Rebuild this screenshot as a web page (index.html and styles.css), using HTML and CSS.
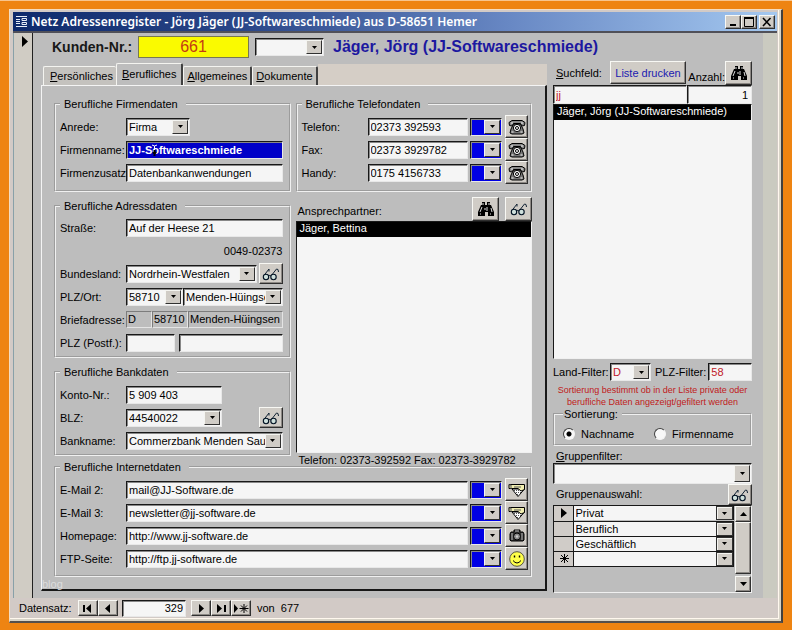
FILE: index.html
```html
<!DOCTYPE html>
<html lang="de">
<head>
<meta charset="utf-8">
<title>Netz Adressenregister</title>
<link rel="stylesheet" href="styles.css">
</head>
<body>
<svg class="defs" aria-hidden="true">
  <symbol id="i-find" viewBox="0 0 16 14">
    <path d="M4 0h3v3h2V0h3v3h1l3 7v4h-6v-4H7v4H0v-4l3-7h1z" fill="#000"/>
    <path d="M5 1v2M11 1v2M4 5l-2 5M9 5v4M7 6v2M13 6l1 4M2 12h1M12 12h1" stroke="#ddd" fill="none"/>
  </symbol>
  <symbol id="i-glasses" viewBox="0 0 18 14">
    <path d="M1.500 9L7 2v2.500M9 9l5.500-7q2-.5 2 3" fill="none" stroke="#123"/>
    <circle cx="4" cy="10" r="2.700" fill="#cfe0dc" stroke="#012" stroke-width="1.100"/>
    <circle cx="11.500" cy="10" r="2.700" fill="#cfe0dc" stroke="#012" stroke-width="1.100"/>
    <path d="M6.500 9q1.200-1.200 2.400 0" fill="none" stroke="#012"/>
  </symbol>
  <symbol id="i-phone" viewBox="0 0 18 16">
    <path d="M1.500 6.500L1 3.500 4 1.500h10l3 2-.5 3-3 .5-1-2.500h-7L4.500 7z" fill="#888" stroke="#000"/>
    <path d="M5.500 5h7l2.500 5 1 4-2 1H4l-2-1 1-4z" fill="#777" stroke="#000"/>
    <circle cx="9" cy="9" r="3.600" fill="#fff" stroke="#000"/>
    <circle cx="9" cy="9" r="1.500" fill="#fff" stroke="#000"/>
    <path d="M3 4h2M13 4h2M3.500 13h2M12.500 13h2" stroke="#eee"/>
  </symbol>
  <symbol id="i-mail" viewBox="0 0 18 14">
    <path d="M4 6l6 7.500L16.500 6z" fill="#fff" stroke="#000"/>
    <path d="M6 7.500h9M8 9.500h6M9 11.500h3" stroke="#555" stroke-dasharray="1 1"/>
    <path d="M1 1.500h15.500v5L13 8 10 5.500H1z" fill="#f2efb0" stroke="#000"/>
    <path d="M1 2h2v4M6 4h7" fill="none" stroke="#555"/>
  </symbol>
  <symbol id="i-camera" viewBox="0 0 16 14">
    <path d="M5 3V1h6v2h3l1 2v6l-1 1H2l-1-1V5l1-2z" fill="#333" stroke="#000"/>
    <path d="M3 4v7M13 4v7M6 2h4" stroke="#bbb"/>
    <circle cx="8" cy="7.500" r="3.500" fill="#888" stroke="#000"/>
    <circle cx="8" cy="7.500" r="1.200" fill="#ccc"/>
  </symbol>
  <symbol id="i-smile" viewBox="0 0 16 16">
    <circle cx="8" cy="8" r="7.300" fill="#ffff4a" stroke="#554"/>
    <path d="M5.500 4.500v2M10.500 4.500v2" stroke="#000" stroke-width="1.400"/>
    <path d="M4 9.500q4 5 8 0" fill="none" stroke="#000"/>
  </symbol>
</svg>

<div class="window">
  <header class="titlebar">
    <svg class="app-icon" width="11" height="11" viewBox="0 0 11 11"><path d="M0 .5h11M0 10.500h11M0 3.500h4M0 5.500h4M0 7.500h4M6 2.500h4.500v2H6zM6 6.500h4.500v2H6z" stroke="#e8eef8" fill="none"/></svg>
    <h1>Netz Adressenregister - Jörg Jäger (JJ-Softwareschmiede) aus D-58651 Hemer</h1>
    <div class="win-buttons">
      <button aria-label="Minimieren"><svg width="10" height="10"><path d="M2 8h6" stroke="#000" stroke-width="2"/></svg></button>
      <button aria-label="Maximieren"><svg width="10" height="10"><path d="M.5 1v8.500h9V1M0 1h10" fill="none" stroke="#000"/><path d="M0 1h10" stroke="#000" stroke-width="2"/></svg></button>
      <button class="close" aria-label="Schließen"><svg width="10" height="10"><path d="M1 1l7.500 8M8.500 1L1 9" stroke="#000" stroke-width="1.600"/></svg></button>
    </div>
  </header>

  <div class="client">
    <div class="record-selector"><svg width="6" height="11"><path d="M0 0l6 5.500L0 11z"/></svg></div>
    <main class="form">
      <div class="left">
        <div class="head">
          <label class="kd-label" for="kdnr">Kunden-Nr.:</label>
          <input class="kdnr" id="kdnr" value="661">
          <span class="combo head-combo"><select aria-label="Kundenauswahl"><option></option></select></span>
          <h2>Jäger, Jörg (JJ-Softwareschmiede)</h2>
        </div>
        <nav class="tabs">
          <button class="tab"><u>P</u>ersönliches</button>
          <button class="tab active"><u>B</u>erufliches</button>
          <button class="tab"><u>A</u>llgemeines</button>
          <button class="tab"><u>D</u>okumente</button>
          <span class="tab-rest"></span>
        </nav>
        <section class="page">
          <div class="columns">
            <div class="col-a">
              <fieldset class="g-firma">
                <legend>Berufliche Firmendaten</legend>
                <div class="row"><label for="anrede">Anrede:</label><span class="combo w-64"><select id="anrede"><option>Firma</option></select></span></div>
                <div class="row"><label for="firma">Firmenname:</label><span class="edit grow"><input class="selected" id="firma" value="JJ-Softwareschmiede"><svg class="caret" width="7" height="13"><path d="M1 1l2.500 1L6 1M3.500 2v4" stroke="#fff" fill="none"/><path d="M3.500 6v6M2 8l1.500 2L5 8" stroke="#000" stroke-width="2" fill="none"/></svg></span></div>
                <div class="row"><label for="zusatz">Firmenzusatz</label><input class="grow" id="zusatz" value="Datenbankanwendungen"></div>
              </fieldset>
              <fieldset class="g-adresse">
                <legend>Berufliche Adressdaten</legend>
                <div class="row"><label for="str">Straße:</label><input class="grow" id="str" value="Auf der Heese 21"></div>
                <div class="row end"><span>0049-02373</span></div>
                <div class="row"><label for="land">Bundesland:</label><span class="combo grow"><select id="land"><option>Nordrhein-Westfalen</option></select></span><button class="icon-btn" aria-label="Anzeigen"><svg width="18" height="14"><use href="#i-glasses"/></svg></button></div>
                <div class="row"><label for="plz">PLZ/Ort:</label><span class="combo w-57"><select id="plz"><option>58710</option></select></span><span class="combo grow"><select aria-label="Ort"><option>Menden-Hüingsen</option></select></span></div>
                <div class="row"><label for="brief">Briefadresse:</label><output class="flat w-26" id="brief">D</output><output class="flat w-36">58710</output><output class="flat grow">Menden-Hüingsen</output></div>
                <div class="row"><label for="postf">PLZ (Postf.):</label><input class="w-49" id="postf"><input class="grow gap-4" aria-label="Ort (Postfach)"></div>
              </fieldset>
              <fieldset class="g-bank">
                <legend>Berufliche Bankdaten</legend>
                <div class="row"><label for="konto">Konto-Nr.:</label><input class="w-96" id="konto" value="5 909 403"></div>
                <div class="row"><label for="blz">BLZ:</label><span class="combo w-96"><select id="blz"><option>44540022</option></select></span><button class="icon-btn push" aria-label="Bank anzeigen"><svg width="18" height="14"><use href="#i-glasses"/></svg></button></div>
                <div class="row"><label for="bank">Bankname:</label><span class="combo grow"><select id="bank"><option>Commerzbank Menden Sauerland</option></select></span></div>
              </fieldset>
            </div>
            <div class="col-b">
              <fieldset class="g-telefon">
                <legend>Berufliche Telefondaten</legend>
                <div class="row"><label for="tel">Telefon:</label><input class="grow" id="tel" value="02373 392593"><span class="combo color"><select aria-label="Farbe Telefon"><option></option></select></span><button class="icon-btn dial" aria-label="Wählen"><svg width="18" height="16"><use href="#i-phone"/></svg></button></div>
                <div class="row"><label for="fax">Fax:</label><input class="grow" id="fax" value="02373 3929782"><span class="combo color"><select aria-label="Farbe Fax"><option></option></select></span><button class="icon-btn dial" aria-label="Fax wählen"><svg width="18" height="16"><use href="#i-phone"/></svg></button></div>
                <div class="row"><label for="handy">Handy:</label><input class="grow" id="handy" value="0175 4156733"><span class="combo color"><select aria-label="Farbe Handy"><option></option></select></span><button class="icon-btn dial" aria-label="Handy wählen"><svg width="18" height="16"><use href="#i-phone"/></svg></button></div>
              </fieldset>
              <div class="partner-head">
                <label for="partner">Ansprechpartner:</label>
                <button class="icon-btn big" aria-label="Suchen"><svg width="16" height="14"><use href="#i-find"/></svg></button>
                <button class="icon-btn big" aria-label="Anzeigen"><svg width="18" height="14"><use href="#i-glasses"/></svg></button>
              </div>
              <select class="list" id="partner" size="2"><option class="current">Jäger, Bettina</option></select>
              <p class="caption">Telefon: 02373-392592 Fax: 02373-3929782</p>
            </div>
          </div>
          <fieldset class="g-net">
            <legend>Berufliche Internetdaten</legend>
            <div class="row"><label for="m2">E-Mail 2:</label><input class="grow" id="m2" value="mail@JJ-Software.de"><span class="combo color"><select aria-label="Farbe E-Mail 2"><option></option></select></span><button class="icon-btn dial" aria-label="Mail senden"><svg width="18" height="14"><use href="#i-mail"/></svg></button></div>
            <div class="row"><label for="m3">E-Mail 3:</label><input class="grow" id="m3" value="newsletter@jj-software.de"><span class="combo color"><select aria-label="Farbe E-Mail 3"><option></option></select></span><button class="icon-btn dial" aria-label="Mail senden"><svg width="18" height="14"><use href="#i-mail"/></svg></button></div>
            <div class="row"><label for="www">Homepage:</label><input class="grow" id="www" value="http://www.jj-software.de"><span class="combo color"><select aria-label="Farbe Homepage"><option></option></select></span><button class="icon-btn dial" aria-label="Homepage öffnen"><svg width="16" height="14"><use href="#i-camera"/></svg></button></div>
            <div class="row"><label for="ftp">FTP-Seite:</label><input class="grow" id="ftp" value="http://ftp.jj-software.de"><span class="combo color"><select aria-label="Farbe FTP"><option></option></select></span><button class="icon-btn dial" aria-label="FTP öffnen"><svg width="16" height="16"><use href="#i-smile"/></svg></button></div>
          </fieldset>
          <span class="mark">blog</span>
        </section>
      </div>

      <aside class="right">
        <div class="search-head">
          <label for="such"><u>S</u>uchfeld:</label>
          <button class="print">Liste drucken</button>
          <label class="count" for="anz">Anzahl:</label>
          <button class="icon-btn big" aria-label="Suchen"><svg width="16" height="14"><use href="#i-find"/></svg></button>
        </div>
        <div class="search-row">
          <input class="red grow" id="such" value="jj"><input class="num" id="anz" value="1">
        </div>
        <select class="list" size="2" aria-label="Adressen"><option class="current">Jäger, Jörg (JJ-Softwareschmiede)</option></select>
        <div class="filters">
          <label for="lf">Land-Filter:</label><span class="combo w-41"><select class="red" id="lf"><option>D</option></select></span>
          <label for="pf">PLZ-Filter:</label><input class="red" id="pf" value="58">
        </div>
        <p class="hint">Sortierung bestimmt ob in der Liste private oder berufliche Daten angezeigt/gefiltert werden</p>
        <fieldset class="g-sort">
          <legend>Sortierung:</legend>
          <label><input type="radio" name="sort" checked>Nachname</label>
          <label><input type="radio" name="sort">Firmenname</label>
        </fieldset>
        <label class="gf-label" for="gf"><u>G</u>ruppenfilter:</label>
        <span class="combo tall"><select id="gf"><option></option></select></span>
        <div class="group-head"><span>Gruppenauswahl:</span><button class="icon-btn" aria-label="Gruppen anzeigen"><svg width="18" height="14"><use href="#i-glasses"/></svg></button></div>
        <div class="subform">
          <div class="grid">
            <table>
              <tr><th><svg width="7" height="10"><path d="M1 0l6 5-6 5z"/></svg></th><td><span class="combo cell"><select aria-label="Gruppe 1"><option>Privat</option></select></span></td></tr>
              <tr><th></th><td><span class="combo cell"><select aria-label="Gruppe 2"><option>Beruflich</option></select></span></td></tr>
              <tr><th></th><td><span class="combo cell"><select aria-label="Gruppe 3"><option>Geschäftlich</option></select></span></td></tr>
              <tr><th><svg width="9" height="9"><path d="M4.500 0v9M0 4.500h9M1 1l7 7M8 1L1 8" stroke="#000"/></svg></th><td><span class="combo cell"><select aria-label="Neue Gruppe"><option></option></select></span></td></tr>
            </table>
          </div>
          <div class="scroll">
            <button aria-label="Nach oben"><svg width="7" height="4"><path d="M3.500 0L7 4H0z"/></svg></button>
            <div class="thumb"></div>
            <button aria-label="Nach unten"><svg width="7" height="4"><path d="M0 0h7L3.500 4z"/></svg></button>
          </div>
        </div>
      </aside>
    </main>
    <div class="client-edge"></div>
  </div>

  <footer class="navbar">
    <label for="rec">Datensatz:</label>
    <div class="nav-group">
      <button aria-label="Erster"><svg width="12" height="9"><path d="M1 1h2v7H1zM9 0v9L4 4.500z"/></svg></button>
      <button aria-label="Vorheriger"><svg width="12" height="9"><path d="M8 0v9L3 4.500z"/></svg></button>
    </div>
    <input id="rec" value="329">
    <div class="nav-group">
      <button aria-label="Nächster"><svg width="12" height="9"><path d="M4 0v9l5-4.500z"/></svg></button>
      <button aria-label="Letzter"><svg width="12" height="9"><path d="M9 1h2v7H9zM2 0v9l5-4.500z"/></svg></button>
      <button aria-label="Neu"><svg width="16" height="9"><path d="M1 0v9l4-4.500z"/><path d="M11 0v9M6.500 4.500h9M8 1.500l6 6M14 1.500l-6 6" stroke="#000"/></svg></button>
    </div>
    <span>von&nbsp; 677</span>
  </footer>
</div>
</body>
</html>
```
FILE: styles.css
```css
* { box-sizing: border-box; }

body {
  margin: 0;
  min-height: 100vh;
  padding: 8px 9px 7px 9px;
  display: flex;
  background: #ee8412;
  border-top: 1px solid #f8c48c;
  font: 11px/14px "Liberation Sans", Arial, sans-serif;
  color: #000;
}

.defs { display: none; }
h1, h2, p { margin: 0; }
svg { display: block; flex: none; }

input, select, button {
  font: inherit;
  color: inherit;
  margin: 0;
  border-radius: 0;
  min-width: 0;
}

.window {
  flex: 1;
  min-width: 0;
  display: flex;
  flex-direction: column;
  background: #d2cac6;
  border: 1px solid #f4dcc0;
  border-right: 2px solid #404040;
  border-bottom: 2px solid #55504c;
  padding: 2px 4px 3px 3px;
  box-shadow: inset -2px -2px #d8d4c8, inset -3px -3px #fff8ee;
}

/* Title bar */
.titlebar {
  display: flex;
  align-items: center;
  height: 19px;
  padding: 0 2px 0 3px;
  gap: 4px;
  background: linear-gradient(90deg, #0e2a6c, #2a4688 30%, #6888c4 65%, #a4c8f0);
}
.titlebar h1 {
  flex: 1;
  font: 600 12px/18px "Noto Sans", sans-serif;
  color: #fff;
  white-space: nowrap;
}
.win-buttons { display: flex; }
.close { margin-left: 2px; }

.win-buttons button,
.icon-btn,
.print,
.nav-group button,
.scroll button,
.thumb {
  display: flex;
  align-items: center;
  justify-content: center;
  padding: 0;
  background: #d0ccc6;
  border: 1px solid;
  border-color: #f8f8f4 #303030 #303030 #f8f8f4;
  box-shadow: inset -1px -1px #8c8884;
}
.win-buttons button { width: 16px; height: 14px; }

/* Client area */
.client {
  flex: 1;
  display: flex;
  border-top: 2px solid #505058;
}
.record-selector {
  width: 20px;
  padding: 3px 0 0 8px;
  background: #d0ccc4;
  border-right: 1px solid #202020;
  border-left: 1px solid #88a0a8;
}
.client-edge { width: 14px; background: #cacac0; }
.form {
  flex: 1;
  min-width: 0;
  display: flex;
  gap: 6px;
  padding: 0 11px 5px 8px;
  background: #bdbdbd;
}
.left { flex: 1; min-width: 0; display: flex; flex-direction: column; margin-bottom: 2px; }
.right {
  width: 199px;
  padding-top: 27px;
  display: flex;
  flex-direction: column;
}

/* Heading */
.head { display: flex; align-items: center; height: 28px; padding-left: 11px; white-space: nowrap; }
.head > * { flex: none; }
.kd-label { width: 86px; font-size: 14px; font-weight: bold; color: #181818; }
.kdnr {
  width: 111px;
  text-align: center;
  font-size: 16px;
  color: #c43c14;
}
.head-combo { width: 69px; margin: 0 9px 0 6px; }
.head h2 { width: 0; font-size: 16px; line-height: 20px; color: #1c18a0; }

/* Tabs */
.tabs { display: flex; align-items: flex-end; height: 24px; padding-left: 2px; }
.tab {
  height: 19px;
  padding: 0 3px;
  background: #c4c2be;
  border: 1px solid #f4f4f0;
  border-right: 2px solid #404040;
  border-bottom: 0;
  border-radius: 2px 2px 0 0;
}
.tab:first-child { border-right: 0; padding-left: 6px; }
.tab.active { height: 22px; padding: 0 5px 2px; background: #bdbdbd; }
.tab-rest { flex: 1; height: 21px; background: #d5cec6; }

.page {
  position: relative;
  flex: 1;
  display: flex;
  flex-direction: column;
  padding: 11px 13px 12px 12px;
  border: 1px solid #f4f4f4;
  border-right: 2px solid #181818;
  border-bottom: 2px solid #181818;
}
.mark { position: absolute; left: 0; bottom: 0; line-height: 10px; color: #dcdcdc; }

.columns { display: flex; gap: 5px; }
.col-a { flex: 1; min-width: 0; }
.col-b { flex: 1; min-width: 0; display: flex; flex-direction: column; }

/* Groups */
fieldset {
  margin: 0;
  min-width: 0;
  padding: 4px 6px 2px 4px;
  border: 2px groove #f0f0f0;
}
legend { padding: 0 8px 0 4px; line-height: 14px; }
.g-firma { padding-bottom: 6px; margin-bottom: 7px; }
.g-adresse { padding-top: 3px; margin-bottom: 7px; }
.g-bank { margin-bottom: 11px; }
.g-telefon { padding-right: 2px; padding-bottom: 6px; }
.g-net { padding-right: 2px; padding-bottom: 5px; margin-top: -7px; }

.row { display: flex; align-items: center; height: 23px; white-space: nowrap; }
.row > label { width: 66px; flex: none; }
.row.end { justify-content: flex-end; }
.grow { flex: 1; }
.push { margin-left: auto; }
.gap-4 { margin-left: 4px; }
.w-26 { width: 26px; }
.w-36 { width: 36px; }
.w-41 { width: 41px; }
.w-49 { width: 49px; }
.w-57 { width: 57px; }
.w-64 { width: 64px; }
.w-96 { width: 96px; }

/* Fields */
input:not([type="radio"]) {
  height: 18px;
  padding: 0 2px;
  background: #f5f5f5;
  border: 1px solid;
  border-color: #181818 #e8e8e8 #e8e8e8 #181818;
  box-shadow: inset 1px 1px #888;
}
input.kdnr:not([type="radio"]) { height: 22px; background: #fafa00; border-color: #787850; box-shadow: none; }
.edit { position: relative; display: flex; min-width: 0; }
.edit input.selected { flex: 1; width: 100%; background: #0000c8; color: #fff; font-weight: bold; }
.caret { position: absolute; left: 25px; top: 3px; }

.combo { position: relative; display: flex; height: 18px; min-width: 0; }
.combo select {
  appearance: none;
  flex: 1;
  width: 100%;
  padding: 0 16px 0 2px;
  background: #f5f5f5;
  border: 1px solid;
  border-color: #181818 #e8e8e8 #e8e8e8 #181818;
  box-shadow: inset 1px 1px #888;
  overflow: hidden;
}
.combo::after {
  content: "";
  position: absolute;
  top: 2px;
  right: 2px;
  bottom: 2px;
  width: 14px;
  border: 1px solid;
  border-color: #f4f4f0 #303030 #303030 #f4f4f0;
  background: #d0ccc6 url("data:image/svg+xml,%3Csvg xmlns='http://www.w3.org/2000/svg' width='5' height='3'%3E%3Cpath d='M0 0h5L2.500 3z'/%3E%3C/svg%3E") no-repeat center;
  pointer-events: none;
}
.combo.color { width: 32px; margin: 0 1px 0 2px; }
.combo.color select { background: #0000e4; }

.flat {
  height: 17px;
  padding-left: 1px;
  line-height: 15px;
  overflow: hidden;
  border: 1px solid;
  border-color: #7c7c7c #e4e4e4 #e4e4e4 #7c7c7c;
}

.icon-btn { width: 24px; height: 21px; margin-left: 2px; flex: none; }
.icon-btn.dial { width: 23px; height: 23px; }
.icon-btn.big { width: 27px; height: 24px; }
.icon-btn.push { margin-left: auto; }

.partner-head { display: flex; align-items: flex-end; height: 29px; gap: 4px; }
.partner-head label { flex: 1; padding: 0 0 3px 2px; }

.list {
  flex: 1;
  display: block;
  width: 100%;
  min-height: 60px;
  padding: 0;
  appearance: none;
  background: #f5f5f5;
  border: 1px solid;
  border-color: #181818 #f0f0f0 #f0f0f0 #181818;
  outline: 0;
  overflow: hidden;
}
.list option { padding: 0 3px 1px; min-height: 15px; line-height: 14px; }
.list .current { background: #000; color: #fff; }
.caption { padding-left: 3px; white-space: nowrap; }

/* Search column */
.search-head { display: flex; align-items: flex-end; height: 25px; white-space: nowrap; }
.search-head label:first-child { width: 57px; padding: 0 0 5px 3px; }
.print { width: 77px; height: 23px; margin-bottom: 1px; color: #2020b0; }
.count { flex: 1; padding: 0 0 1px 2px; }
.search-head .big { margin-left: 0; }
.search-row { display: flex; }
.search-row input:not([type="radio"]) { height: 19px; }
.search-row .num { width: 65px; text-align: right; padding-right: 3px; }
input.red, select.red { color: #c01828; }

.filters { display: flex; align-items: center; height: 22px; margin-top: 2px; white-space: nowrap; }
.filters label:first-child { width: 57px; }
.filters .combo { margin-right: 4px; }
.filters #pf { flex: 1; margin-left: 2px; }
.hint { margin-top: 1px; text-align: center; font-size: 9px; line-height: 12px; color: #c02020; }
.g-sort { display: flex; align-items: center; height: 39px; padding: 6px 0 0 8px; margin-top: -1px; }
.g-sort legend { padding: 0 4px 0 1px; }
.g-sort label { display: flex; align-items: center; gap: 6px; width: 91px; }
.g-sort input {
  appearance: none;
  width: 12px;
  height: 12px;
  border-radius: 50%;
  border: 1px solid;
  border-color: #404040 #f4f4f4 #f4f4f4 #404040;
  background: #f8f8f8;
}
.g-sort input:checked { background: radial-gradient(circle, #000 2px, #f8f8f8 3px); }
.gf-label { padding: 3px 0 0 3px; }
.combo.tall { height: 21px; }
.group-head { display: flex; align-items: flex-end; justify-content: space-between; height: 21px; padding-left: 3px; }
.group-head span { padding-bottom: 4px; }

.subform {
  display: flex;
  height: 88px;
  border: 1px solid;
  border-color: #181818 #f0f0f0 #f0f0f0 #181818;
}
.grid { flex: 1; }
.grid table { width: 100%; border-collapse: collapse; }
.grid th { width: 19px; height: 15px; padding: 0 0 0 6px; background: #d0ccc8; border: 1px solid #181818; border-width: 0 1px 1px 0; }
.grid td { padding: 0; border-bottom: 1px solid #181818; }
.combo.cell { height: 14px; }
.combo.cell select { border: 0; box-shadow: none; }
.combo.cell::after { top: 0; right: 0; bottom: 0; width: 15px; border-color: #303030; box-shadow: inset 1px 1px #f4f4f0; }
.grid .combo { border-right: 1px solid #181818; }
.scroll { width: 16px; display: flex; flex-direction: column; margin-left: 1px; }
.scroll button { height: 16px; }
.thumb { flex: 1; margin-bottom: 2px; }

/* Record navigation */
.navbar { display: flex; align-items: center; height: 20px; padding-left: 6px; }
.navbar label { width: 59px; }
.nav-group { display: flex; }
.nav-group button { width: 20px; height: 16px; }
.navbar #rec { width: 64px; height: 17px; margin: 0 5px 0 4px; text-align: right; }
.navbar > span { margin-left: 6px; }
```
